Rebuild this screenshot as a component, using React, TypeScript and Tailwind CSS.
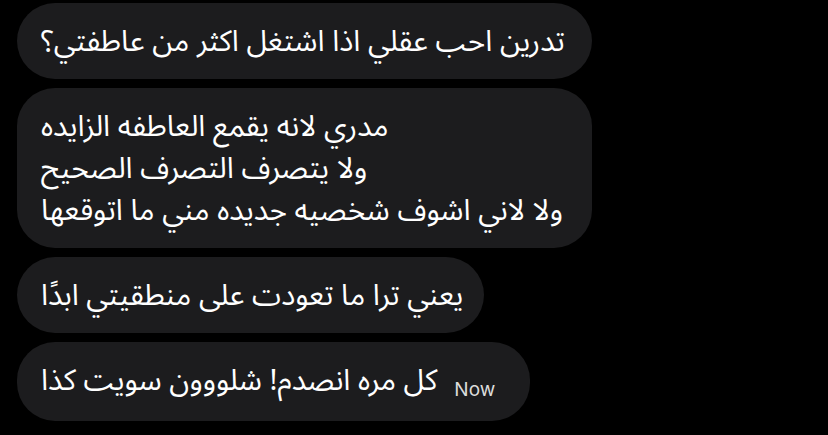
import React from "react";

const arabic = {
  fontFamily: '"Noto Sans Arabic", "Noto Sans", "DejaVu Sans", sans-serif',
};

function Bubble({ children, className = "" }: { children: React.ReactNode; className?: string }) {
  return (
    <div
      className={`whitespace-nowrap rounded-[38px] bg-[#1c1c1e] pb-[16px] pl-[24px] pr-[20px] pt-[18px] text-[29.5px] leading-[42px] text-white ${className}`}
      style={arabic}
    >
      {children}
    </div>
  );
}

export default function App() {
  return (
    <div className="flex h-[435px] w-[828px] flex-col items-start gap-[9px] overflow-hidden bg-black pl-[17px] pt-[3px]">
      <Bubble className="w-[575px]">
        <p dir="rtl" className="text-left">تدرين احب عقلي اذا اشتغل اكثر من عاطفتي؟</p>
      </Bubble>
      <Bubble className="w-[575px]">
        <p dir="rtl" className="text-left">مدري لانه يقمع العاطفه الزايده</p>
        <p dir="rtl" className="text-left">ولا يتصرف التصرف الصحيح</p>
        <p dir="rtl" className="text-left">ولا لاني اشوف شخصيه جديده مني ما اتوقعها</p>
      </Bubble>
      <Bubble className="w-[467px]">
        <p dir="rtl" className="text-left">يعني ترا ما تعودت على منطقيتي ابدًا</p>
      </Bubble>
      <Bubble className="w-[513px]">
        <div className="flex items-baseline">
          <p dir="rtl" className="text-left">كل مره انصدم! شلووون سويت كذا</p>
          <span
            className="ml-[17px] translate-y-[6px] text-[19px] text-[#dcdcdc]"
            style={{ fontFamily: 'Inter, "Liberation Sans", sans-serif' }}
          >
            Now
          </span>
        </div>
      </Bubble>
    </div>
  );
}
